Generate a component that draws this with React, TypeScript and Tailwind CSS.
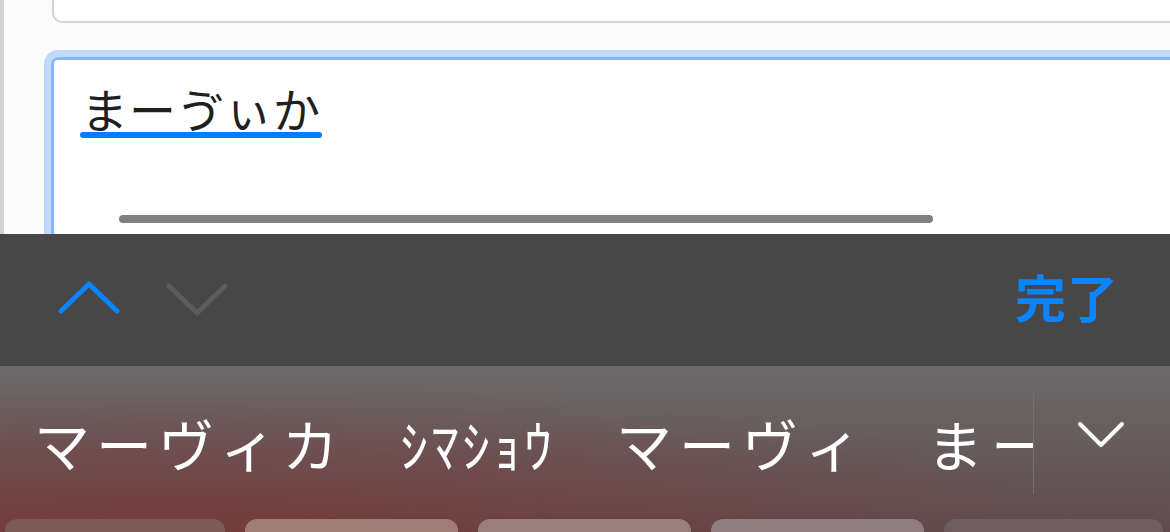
import React from "react";

const jp = { fontFamily: '"Noto Sans CJK JP", "Noto Sans", sans-serif' };

export default function App() {
  return (
    <div className="w-[1170px] h-[532px] overflow-hidden flex flex-col" style={jp}>
      {/* page area */}
      <div className="h-[234px] flex bg-[#fbfbfb] overflow-hidden">
        <div className="w-[4px] bg-[#d2d2d2] shrink-0" />
        <div className="flex-1 flex flex-col pl-[40px]">
          <div className="h-[23px] ml-[8px] border-l-2 border-b-2 border-[#d5d5d9] rounded-bl-[10px] bg-white shrink-0" />
          <div className="mt-[27px] w-[1200px] flex-1 border-[7px] border-b-0 border-[#c2d9fc] rounded-t-[14px] flex">
            <div className="flex-1 border-[3px] border-b-0 border-[#85b5fa] rounded-t-[7px] bg-white flex flex-col pl-[27px] pt-[24px]">
              <div className="inline-flex flex-col self-start">
                <span className="text-[47px] leading-[48px] text-[#1f1f22] tracking-[1px]">まーゔぃか</span>
                <div className="h-[6px] rounded-full bg-[#0a7aff] -mx-[1px]" />
              </div>
              <div className="mt-[77px] ml-[38px] w-[814px] h-[8px] rounded-full bg-[#808080]" />
            </div>
          </div>
        </div>
      </div>

      {/* toolbar */}
      <div className="h-[132px] bg-[#474747] flex items-center pl-[58px] pr-[51px] shrink-0">
        <svg width="62" height="36" viewBox="0 0 62 36" className="mt-[-4px]">
          <path d="M3 31 L31 4 L59 31" fill="none" stroke="#0a84ff" strokeWidth="5" strokeLinecap="round" strokeLinejoin="round" />
        </svg>
        <svg width="62" height="38" viewBox="0 0 62 38" className="ml-[46px] mt-[0px]">
          <path d="M3 5 L31 32 L59 5" fill="none" stroke="#5b5b5b" strokeWidth="5" strokeLinecap="round" strokeLinejoin="round" />
        </svg>
        <div className="flex-1" />
        <span className="text-[51px] font-bold text-[#0a84ff] leading-none tracking-[1px] mt-[-8px]">完了</span>
      </div>

      {/* candidate bar */}
      <div className="flex-1 flex flex-col bg-[radial-gradient(ellipse_at_15%_100%,rgba(135,45,45,0.55),transparent_65%),linear-gradient(to_bottom,#6c6a6a,#5f4b4d)]">
        <div className="h-[153px] flex items-center shrink-0">
          <div className="w-[1033px] h-full flex items-center overflow-hidden text-white text-[56px] leading-none">
            <span className="ml-[34px] shrink-0 tracking-[6px]">マーヴィカ</span>
            <span className="ml-[56px] shrink-0 tracking-[3px]">ｼﾏｼｮｳ</span>
            <span className="ml-[61px] shrink-0 tracking-[7px]">マーヴィ</span>
            <span className="ml-[59px] shrink-0 tracking-[8px]">まー</span>
          </div>
          <div className="w-[1px] h-[102px] bg-[#747070]" />
          <div className="flex-1 flex justify-center pr-[2px] mt-[-16px]">
            <svg width="50" height="32" viewBox="0 0 50 32">
              <path d="M4 5 L25 26 L46 5" fill="none" stroke="#ffffff" strokeWidth="4" strokeLinecap="round" strokeLinejoin="round" />
            </svg>
          </div>
        </div>
        <div className="flex gap-[20px] px-[5px] flex-1">
          <div className="w-[220px] rounded-t-[12px] bg-[#7d5957]" />
          <div className="w-[213px] rounded-t-[12px] bg-[#a07c79]" />
          <div className="w-[213px] rounded-t-[12px] bg-[#9a7d7d]" />
          <div className="w-[213px] rounded-t-[12px] bg-[#8f7e80]" />
          <div className="w-[219px] rounded-t-[12px] bg-[#6e5d5f]" />
        </div>
      </div>
    </div>
  );
}
